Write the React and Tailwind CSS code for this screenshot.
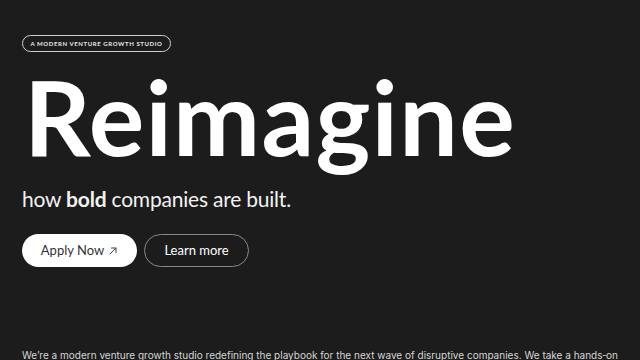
import React from 'react';

export default function App() {
    return (
        <div className="h-screen w-full overflow-hidden bg-[#1c1c1c] text-white px-[22px]">
            {/* Badge */}
            <div className="flex pt-[35px]">
                <span
                    className="flex h-[17px] w-[149px] items-center justify-center whitespace-nowrap rounded-full border border-[#cfcfcf] text-[6px] font-bold uppercase leading-none tracking-[0.1em] text-[#e8e8e8]"
                    style={{ fontFamily: '"Lato", "Open Sans", sans-serif' }}
                >
                    A Modern Venture Growth Studio
                </span>
            </div>

            {/* Headline */}
            <h1
                className="mt-[12px] h-[104px] pl-[2px] text-[104px] font-bold leading-none tracking-[0.012em] text-white"
                style={{ fontFamily: '"Lato", sans-serif' }}
            >
                Reimagine
            </h1>

            <p
                className="mt-[20px] text-[21px] leading-none tracking-[-0.01em] text-[#f2f2f2]"
                style={{ fontFamily: '"Lato", sans-serif' }}
            >
                how <span className="font-bold">bold</span> companies are built.
            </p>

            {/* Actions */}
            <div className="mt-[25px] flex items-center gap-[7px]" style={{ fontFamily: '"Lato", sans-serif' }}>
                <button className="flex h-[33px] w-[115px] items-center justify-center gap-[4px] rounded-full bg-white text-[13px] text-[#333]">
                    Apply Now
                    <svg width="10" height="10" viewBox="0 0 10 10" fill="none" stroke="#444" strokeWidth="1" strokeLinecap="round">
                        <path d="M2 8 L8 2 M3.5 2 H8 V6.5" />
                    </svg>
                </button>
                <button className="flex h-[33px] w-[105px] items-center justify-center rounded-full border border-[#8a8a8a] text-[13px] text-white">
                    Learn more
                </button>
            </div>

            {/* Intro */}
            <p
                className="mt-[80px] text-justify text-[10px] leading-[16px] text-[#d6d6d6]"
                style={{ fontFamily: '"Inter", "Liberation Sans", sans-serif' }}
            >
                We’re a modern venture growth studio redefining the playbook for the next wave of disruptive companies. We take a hands&#8209;on approach to building, scaling and backing founders with the operators, capital and network they need to grow.
            </p>
        </div>
    );
}
